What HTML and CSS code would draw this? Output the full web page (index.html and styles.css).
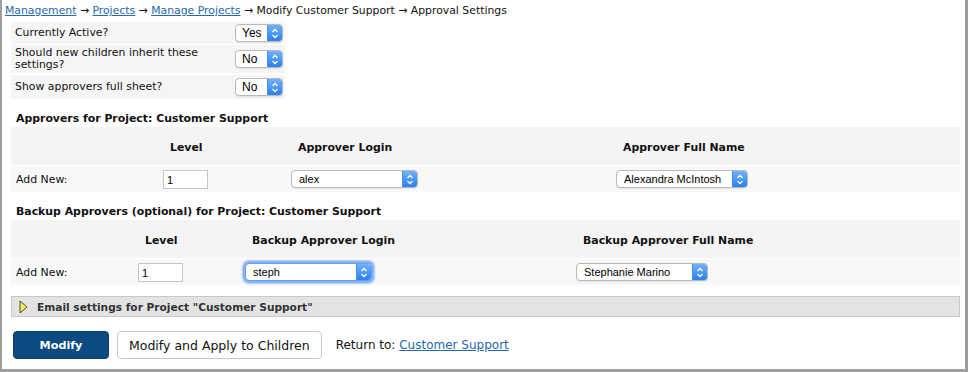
FILE: index.html
```html
<!DOCTYPE html>
<html>
<head>
    <meta charset="UTF-8">
    <title>Approval Settings</title>
    <link rel="stylesheet" href="styles.css">
</head>
<body>
    <div class="page">
        <nav class="crumbs">
            <a href="#">Management</a> &rarr; <a href="#">Projects</a> &rarr; <a href="#">Manage Projects</a> &rarr; Modify Customer Support &rarr; Approval Settings
        </nav>

        <div class="settings">
            <div class="setting-row">
                <span class="setting-label">Currently Active?</span>
                <div class="select select-sm">
                    <span class="select-value">Yes</span>
                    <span class="select-arrow"><svg width="8" height="11" viewBox="0 0 8 11"><path d="M1.5 4 L4 1.5 L6.5 4 M1.5 7 L4 9.5 L6.5 7" fill="none" stroke="#fff" stroke-width="1.3"/></svg></span>
                </div>
            </div>
            <div class="setting-row setting-row-tall">
                <span class="setting-label">Should new children inherit these settings?</span>
                <div class="select select-sm">
                    <span class="select-value">No</span>
                    <span class="select-arrow"><svg width="8" height="11" viewBox="0 0 8 11"><path d="M1.5 4 L4 1.5 L6.5 4 M1.5 7 L4 9.5 L6.5 7" fill="none" stroke="#fff" stroke-width="1.3"/></svg></span>
                </div>
            </div>
            <div class="setting-row">
                <span class="setting-label">Show approvers full sheet?</span>
                <div class="select select-sm">
                    <span class="select-value">No</span>
                    <span class="select-arrow"><svg width="8" height="11" viewBox="0 0 8 11"><path d="M1.5 4 L4 1.5 L6.5 4 M1.5 7 L4 9.5 L6.5 7" fill="none" stroke="#fff" stroke-width="1.3"/></svg></span>
                </div>
            </div>
        </div>

        <h2 class="section-title">Approvers for Project: Customer Support</h2>
        <div class="approvers approvers-main">
            <div class="approvers-head">
                <span></span>
                <span>Level</span>
                <span>Approver Login</span>
                <span>Approver Full Name</span>
            </div>
            <div class="approvers-row">
                <span class="row-label">Add New:</span>
                <input class="level-input" type="text" value="1">
                <div class="select select-login">
                    <span class="select-value">alex</span>
                    <span class="select-arrow"><svg width="8" height="11" viewBox="0 0 8 11"><path d="M1.5 4 L4 1.5 L6.5 4 M1.5 7 L4 9.5 L6.5 7" fill="none" stroke="#fff" stroke-width="1.3"/></svg></span>
                </div>
                <div class="select select-name">
                    <span class="select-value">Alexandra McIntosh</span>
                    <span class="select-arrow"><svg width="8" height="11" viewBox="0 0 8 11"><path d="M1.5 4 L4 1.5 L6.5 4 M1.5 7 L4 9.5 L6.5 7" fill="none" stroke="#fff" stroke-width="1.3"/></svg></span>
                </div>
            </div>
        </div>

        <h2 class="section-title">Backup Approvers (optional) for Project: Customer Support</h2>
        <div class="approvers approvers-backup">
            <div class="approvers-head">
                <span></span>
                <span>Level</span>
                <span>Backup Approver Login</span>
                <span>Backup Approver Full Name</span>
            </div>
            <div class="approvers-row">
                <span class="row-label">Add New:</span>
                <input class="level-input" type="text" value="1">
                <div class="select select-login focused">
                    <span class="select-value">steph</span>
                    <span class="select-arrow"><svg width="8" height="11" viewBox="0 0 8 11"><path d="M1.5 4 L4 1.5 L6.5 4 M1.5 7 L4 9.5 L6.5 7" fill="none" stroke="#fff" stroke-width="1.3"/></svg></span>
                </div>
                <div class="select select-name">
                    <span class="select-value">Stephanie Marino</span>
                    <span class="select-arrow"><svg width="8" height="11" viewBox="0 0 8 11"><path d="M1.5 4 L4 1.5 L6.5 4 M1.5 7 L4 9.5 L6.5 7" fill="none" stroke="#fff" stroke-width="1.3"/></svg></span>
                </div>
            </div>
        </div>

        <div class="email-bar">
            <svg class="toggle" width="9" height="14" viewBox="0 0 9 14"><path d="M1 1 L8 7 L1 13 Z" fill="#f4ee55" stroke="#4a4a3a" stroke-width="1" stroke-linejoin="round"/></svg>
            <span>Email settings for Project "Customer Support"</span>
        </div>

        <div class="actions">
            <button class="btn btn-primary">Modify</button>
            <button class="btn">Modify and Apply to Children</button>
            <span class="return">Return to: <a href="#">Customer Support</a></span>
        </div>
    </div>
</body>
</html>
```

FILE: styles.css
```css
/* Base */
* {
    margin: 0;
    padding: 0;
    box-sizing: border-box;
}

html, body {
    height: 100%;
}

body {
    background: #fff;
    font-family: 'DejaVu Sans', Verdana, sans-serif;
    font-size: 10.9px;
    color: #111;
}

a {
    color: #2769ad;
    text-decoration: underline;
}

.page {
    height: 372px;
    border-left: 2px solid #9e9e9e;
    border-right: 3px solid #9e9e9e;
    border-bottom: 3px solid #9e9e9e;
    padding: 4px 5px 0 3px;
}

/* Breadcrumb */
.crumbs {
    font-size: 10.85px;
    line-height: 14px;
    white-space: nowrap;
}

/* Top settings */
.settings {
    width: 274px;
    margin: 4px 0 0 6px;
    display: flex;
    flex-direction: column;
    gap: 1px;
}

.setting-row {
    display: flex;
    align-items: center;
    background: #f5f5f5;
    min-height: 22px;
    padding: 0 2px 0 4px;
}

.setting-row-tall {
    min-height: 28px;
    margin-bottom: 1px;
}

.setting-row:last-child {
    min-height: 24px;
}

.setting-label {
    width: 220px;
    line-height: 12px;
    padding-right: 18px;
}

/* Fake selects */
.select {
    display: flex;
    align-items: stretch;
    height: 18px;
    background: #fff;
    border: 1px solid #b9b9b9;
    border-radius: 4px;
    font-family: 'Liberation Sans', Arial, sans-serif;
    font-size: 11px;
    color: #000;
    overflow: hidden;
    box-shadow: 0 1px 1px rgba(0, 0, 0, 0.08);
}

.select-value {
    flex: 1;
    display: flex;
    align-items: center;
    padding-left: 7px;
    white-space: nowrap;
}

.select-arrow {
    width: 15px;
    display: flex;
    align-items: center;
    justify-content: center;
    background: linear-gradient(#6fb2fb, #2a7ff0);
    border-left: 1px solid #4b8fe6;
}

.select-sm {
    width: 48px;
    font-size: 12px;
}

.select-sm .select-value {
    padding-left: 6px;
}

.select-login {
    width: 127px;
}

.select-name {
    width: 132px;
}

.focused {
    overflow: visible;
    box-shadow: 0 0 0 2px #86b3f4, 0 0 2px 3px rgba(110, 160, 240, 0.55);
    border-color: #6a9de8;
}

.focused .select-arrow {
    border-radius: 0 3px 3px 0;
}

/* Approver tables */
.section-title {
    font-size: 10.9px;
    font-weight: bold;
    line-height: 13px;
    margin: 13px 0 2px 11px;
}

.approvers {
    margin-left: 6px;
    display: flex;
    flex-direction: column;
    gap: 1px;
}

.approvers-head,
.approvers-row {
    display: grid;
    align-items: center;
}

.approvers-main .approvers-head,
.approvers-main .approvers-row {
    grid-template-columns: 152px 128px 325px 1fr;
}

.approvers-backup .approvers-head,
.approvers-backup .approvers-row {
    grid-template-columns: 127px 107px 331px 1fr;
}

.approvers-head {
    height: 38px;
    background: #f4f4f4;
    font-weight: bold;
    padding-top: 2px;
}

.approvers-head span {
    padding-left: 7px;
}

.approvers-row {
    height: 26px;
    background: #f8f8f8;
}

.row-label {
    padding-left: 5px;
}

.level-input {
    width: 45px;
    height: 19px;
    border: 1px solid #c4c4c4;
    font-family: 'Liberation Sans', Arial, sans-serif;
    font-size: 11px;
    padding: 1px 3px 0;
    color: #000;
}

/* Email section toggle */
.email-bar {
    margin: 11px 0 0 6px;
    height: 21px;
    display: flex;
    align-items: center;
    gap: 9px;
    background: #e3e3e3;
    border: 1px solid #c8c8c8;
    padding-left: 7px;
    font-size: 10.6px;
    font-weight: bold;
    color: #333;
}

/* Buttons */
.actions {
    display: flex;
    align-items: center;
    margin: 14px 0 0 8px;
}

.btn {
    height: 28px;
    padding: 0 11px;
    background: #fff;
    border: 1px solid #c6c6c6;
    border-radius: 4px;
    font-family: 'DejaVu Sans', Verdana, sans-serif;
    font-size: 12.5px;
    color: #111;
    margin-right: 8px;
}

.btn-primary {
    width: 96px;
    background: #0b4b82;
    border-color: #083c69;
    color: #fff;
    font-size: 11.2px;
    font-weight: bold;
}

.return {
    margin-left: 6px;
    font-size: 12px;
}
```
